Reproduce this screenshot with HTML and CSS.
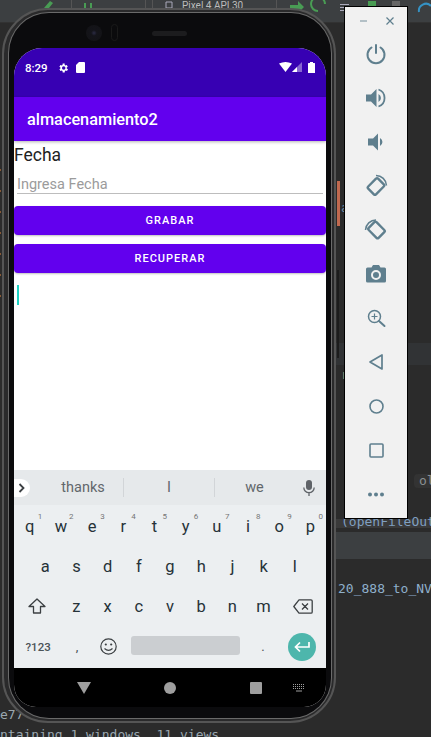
FILE: index.html
```html
<!DOCTYPE html>
<html lang="en">
<head>
  <meta charset="UTF-8">
  <meta name="viewport" content="width=device-width, initial-scale=1.0">
  <title>almacenamiento2</title>
  <link rel="stylesheet" href="styles.css">
</head>
<body>
  <!-- IDE behind the emulator -->
  <div class="ide">
    <div class="ide-top">
      <svg class="ide-icons" width="431" height="22" viewBox="0 0 431 22">
        <path stroke="#555" d="M71.500 0v22M145.500 0v22M152.500 0v22M276.500 0v22"/>
        <path fill="#499c54" d="M44 8l6-7 3 2-4 5zM84 3h2v5h-2zM90 3h2v5h-2zM290 5h8V1l6 6-6 6v-4h-8z"/>
        <path fill="none" stroke="#499c54" stroke-width="2" d="M325 4a7 7 0 1 0-7 7"/>
        <path fill="none" stroke="#aab" d="M166 2h6v6h-6z"/>
        <path fill="#aab" d="M340 4h9v1h-9zM340 7h9v1h-9zM340 10h9v1h-9z"/>
        <path fill="#499c54" d="M368 1h8v5h-8z"/>
        <path fill="#666" d="M392 1h8v5h-8z"/>
        <path fill="none" stroke="#3592c4" stroke-width="2" d="M419 12a7 7 0 0 1 12-6"/>
      </svg>
      <span class="ide-device">Pixel 4 API 30</span>
    </div>
    <div class="ide-row"></div>
    <div class="ide-bar"></div>
    <div class="ide-strip"></div>
    <div class="ide-gutter"></div>
    <div class="ide-mark"></div>
    <div class="ide-scroll"></div>
    <span class="ide-text t1">a</span>
    <span class="ide-text t2">r</span>
    <span class="ide-text t3">ole</span>
    <span class="ide-text t4">(openFileOut</span>
    <span class="ide-text t5">20_888_to_NV</span>
    <span class="ide-text t6">e77</span>
    <span class="ide-text t7">ntaining 1 windows, 11 views</span>
  </div>

  <!-- Phone -->
  <div class="phone">
    <div class="bezel">
      <div class="camera"></div>
      <div class="sensor"></div>
      <div class="speaker"></div>
      <div class="screen">
        <div class="status">
          <span class="time">8:29</span>
          <svg class="st-icon" width="12" height="12" viewBox="0 0 24 24"><path fill="#fff" fill-rule="evenodd" d="M19.400 13a7.500 7.500 0 0 0 0-2l2.100-1.600-2-3.500-2.500 1a7.500 7.500 0 0 0-1.700-1L15.400 3.200h-4L11 5.900a7.500 7.500 0 0 0-1.700 1l-2.500-1-2 3.500L6.900 11a7.500 7.500 0 0 0 0 2l-2.100 1.600 2 3.500 2.500-1a7.500 7.500 0 0 0 1.700 1l.4 2.700h4l.4-2.700a7.500 7.500 0 0 0 1.700-1l2.500 1 2-3.500zM13.400 15.500a3.500 3.500 0 1 1 0-7 3.500 3.500 0 0 1 0 7z"/></svg>
          <svg class="st-icon sd" width="9" height="11" viewBox="0 0 9 11"><path fill="#fff" d="M3 0h5a1 1 0 0 1 1 1v9a1 1 0 0 1-1 1H1a1 1 0 0 1-1-1V3z"/></svg>
          <span class="st-gap"></span>
          <svg width="13" height="10" viewBox="0 0 13 10"><path fill="#fff" d="M0 1.500Q6.500-1.500 13 1.500L6.500 10z"/></svg>
          <svg class="signal" width="10" height="10" viewBox="0 0 10 10"><path fill="#fff" opacity=".4" d="M10 0v10H0z"/><path fill="#fff" d="M5 5v5H0z"/></svg>
          <svg class="battery" width="7" height="11" viewBox="0 0 7 11"><path fill="#fff" d="M2 0h3v1h1.500a.5.5 0 0 1 .5.500V11H0V1.500A.5.5 0 0 1 .5 1H2z"/></svg>
        </div>
        <div class="appbar">almacenamiento2</div>
        <div class="content">
          <div class="label">Fecha</div>
          <div class="field">Ingresa Fecha</div>
          <div class="btn btn-first">GRABAR</div>
          <div class="btn">RECUPERAR</div>
          <div class="caret"></div>
        </div>
        <div class="suggest">
          <div class="chevron">
            <svg width="8" height="10" viewBox="0 0 8 10"><path fill="none" stroke="#3c4043" stroke-width="1.800" d="M1.500 1l4 4-4 4"/></svg>
          </div>
          <div class="word w1">thanks</div>
          <div class="word w2">I</div>
          <div class="word w3">we</div>
          <svg class="mic" width="12" height="16" viewBox="0 0 12 16"><rect x="3" y="0" width="6" height="10" rx="3" fill="#5f6368"/><path fill="none" stroke="#5f6368" stroke-width="1.300" d="M.8 7.500a5.200 5.200 0 0 0 10.400 0M6 13v3"/></svg>
        </div>
        <div class="keyboard">
          <div class="row">
            <div class="key">q<sup>1</sup></div>
            <div class="key">w<sup>2</sup></div>
            <div class="key">e<sup>3</sup></div>
            <div class="key">r<sup>4</sup></div>
            <div class="key">t<sup>5</sup></div>
            <div class="key">y<sup>6</sup></div>
            <div class="key">u<sup>7</sup></div>
            <div class="key">i<sup>8</sup></div>
            <div class="key">o<sup>9</sup></div>
            <div class="key">p<sup>0</sup></div>
          </div>
          <div class="row">
            <div class="key">a</div>
            <div class="key">s</div>
            <div class="key">d</div>
            <div class="key">f</div>
            <div class="key">g</div>
            <div class="key">h</div>
            <div class="key">j</div>
            <div class="key">k</div>
            <div class="key">l</div>
          </div>
          <div class="row">
            <div class="key key-wide">
              <svg width="18" height="16" viewBox="0 0 18 16"><path fill="none" stroke="#3c4043" stroke-width="1.300" stroke-linejoin="round" d="M9 1L1 8.500h4.500V15h7V8.500H17z"/></svg>
            </div>
            <div class="key">z</div>
            <div class="key">x</div>
            <div class="key">c</div>
            <div class="key">v</div>
            <div class="key">b</div>
            <div class="key">n</div>
            <div class="key">m</div>
            <div class="key key-wide">
              <svg width="20" height="15" viewBox="0 0 20 15"><path fill="none" stroke="#3c4043" stroke-width="1.300" stroke-linejoin="round" d="M6 .8h12a1.200 1.200 0 0 1 1.200 1.200v11a1.200 1.200 0 0 1-1.200 1.200H6L.8 7.500zM9 4.500l6 6M15 4.500l-6 6"/></svg>
            </div>
          </div>
          <div class="row row-last">
            <div class="key key-wide key-sym">?123</div>
            <div class="key key-punct">,</div>
            <div class="key">
              <svg width="17" height="17" viewBox="0 0 17 17"><circle cx="8.500" cy="8.500" r="7.700" fill="none" stroke="#3c4043" stroke-width="1.200"/><circle cx="5.800" cy="6.500" r="1.100" fill="#3c4043"/><circle cx="11.200" cy="6.500" r="1.100" fill="#3c4043"/><path fill="none" stroke="#3c4043" stroke-width="1.200" d="M4.500 10.500q4 3.600 8 0"/></svg>
            </div>
            <div class="space"><div class="space-bar"></div></div>
            <div class="key key-punct">.</div>
            <div class="key key-wide">
              <div class="enter">
                <svg width="16" height="12" viewBox="0 0 16 12"><path fill="none" stroke="#fff" stroke-width="1.700" d="M15 1v5H2M6 1.500L1.500 6 6 10.500"/></svg>
              </div>
            </div>
          </div>
        </div>
        <div class="navbar">
          <svg class="nav-back" width="14" height="12" viewBox="0 0 14 12"><path fill="#9e9e9e" d="M0 0h14L7 12z"/></svg>
          <div class="nav-home"></div>
          <div class="nav-recent"></div>
          <svg class="nav-kbd" width="14" height="9" viewBox="0 0 14 9"><path stroke="#9e9e9e" stroke-dasharray="1 1" d="M1 1.500h12M1 3.500h12M1 5.500h12"/><path stroke="#9e9e9e" d="M4 8h6"/></svg>
        </div>
      </div>
    </div>
  </div>

  <!-- Emulator toolbar -->
  <div class="tools">
    <div class="tools-top">
      <svg width="10" height="10" viewBox="0 0 10 10"><path stroke="#8aa0aa" stroke-width="1.200" d="M1 5h7"/></svg>
      <svg width="10" height="10" viewBox="0 0 10 10"><path stroke="#5f7f8e" stroke-width="1.200" d="M1.500 1.500l7 7M8.500 1.500l-7 7"/></svg>
    </div>
    <div class="tool"><svg width="22" height="22" viewBox="0 0 22 22"><path fill="none" stroke="#5f7f8e" stroke-width="2" stroke-linecap="round" d="M11 2v8M6.500 4.500a8.500 8.500 0 1 0 9 0"/></svg></div>
    <div class="tool"><svg width="22" height="22" viewBox="0 0 22 22"><path fill="#5f7f8e" d="M1 7.500h5L11.500 2v18L6 14.500H1zM13.500 7a4.500 4.500 0 0 1 0 8z"/><path fill="none" stroke="#5f7f8e" stroke-width="1.800" d="M13.500 2.500a9 9 0 0 1 0 17"/></svg></div>
    <div class="tool"><svg width="22" height="22" viewBox="0 0 22 22"><path fill="#5f7f8e" d="M3 7.500h5L13 2.500v17L8 14.500H3zM15 7a4.500 4.500 0 0 1 0 8z"/></svg></div>
    <div class="tool"><svg width="24" height="24" viewBox="0 0 24 24"><g fill="none" stroke="#5f7f8e"><rect x="5" y="7" width="14" height="11" rx="1.500" stroke-width="2.400" transform="rotate(-45 12 12.500)"/><path stroke-width="1.500" d="M12 1.500a10.500 10.500 0 0 1 10.500 10"/></g></svg></div>
    <div class="tool"><svg width="24" height="24" viewBox="0 0 24 24"><g fill="none" stroke="#5f7f8e"><rect x="7" y="5" width="11" height="14" rx="1.500" stroke-width="2.400" transform="rotate(-45 12.500 12)"/><path stroke-width="1.500" d="M1.500 12a10.500 10.500 0 0 1 10.500-10"/></g></svg></div>
    <div class="tool"><svg width="20" height="18" viewBox="0 0 20 18"><path fill="#5f7f8e" fill-rule="evenodd" d="M1.500 2.500h4L7 0h6l1.500 2.500h4A1.500 1.500 0 0 1 20 4v12a1.500 1.500 0 0 1-1.500 1.500h-17A1.500 1.500 0 0 1 0 16V4a1.500 1.500 0 0 1 1.500-1.500zM10 5a5 5 0 1 0 0 10 5 5 0 0 0 0-10zM10 7a3 3 0 1 1 0 6 3 3 0 0 1 0-6z"/></svg></div>
    <div class="tool"><svg width="19" height="19" viewBox="0 0 19 19"><g fill="none" stroke="#5f7f8e"><circle cx="7.500" cy="7.500" r="6" stroke-width="1.500"/><path stroke-width="2" stroke-linecap="round" d="M12 12l5.500 5"/><path stroke-width="1.200" d="M7.500 4.500v6M4.500 7.500h6"/></g></svg></div>
    <div class="tool"><svg width="14" height="16" viewBox="0 0 14 16"><path fill="none" stroke="#5f7f8e" stroke-width="1.700" stroke-linejoin="round" d="M13 1v14L1 8z"/></svg></div>
    <div class="tool"><svg width="15" height="15" viewBox="0 0 15 15"><circle cx="7.500" cy="7.500" r="6.500" fill="none" stroke="#5f7f8e" stroke-width="1.600"/></svg></div>
    <div class="tool"><svg width="15" height="15" viewBox="0 0 15 15"><rect x="1" y="1" width="13" height="13" rx="1" fill="none" stroke="#5f7f8e" stroke-width="1.600"/></svg></div>
    <div class="tool"><svg width="16" height="5" viewBox="0 0 16 5"><circle cx="2" cy="2.500" r="2" fill="#5f7f8e"/><circle cx="8" cy="2.500" r="2" fill="#5f7f8e"/><circle cx="14" cy="2.500" r="2" fill="#5f7f8e"/></svg></div>
  </div>
</body>
</html>
```

FILE: styles.css
```css
html, body {
  margin: 0;
  padding: 0;
  height: 100%;
}

body {
  position: relative;
  width: 431px;
  height: 737px;
  overflow: hidden;
  background-color: #2b2b2b;
  font-family: Roboto, "Liberation Sans", sans-serif;
}

/* IDE behind the emulator */
.ide-top {
  position: relative;
  height: 22px;
  background-color: #3c3f41;
  border-bottom: 1px solid #323232;
}

.ide-icons {
  display: block;
}

.ide-device {
  position: absolute;
  left: 182px;
  top: 0;
  font-size: 10px;
  line-height: 12px;
  color: #bbb;
  white-space: nowrap;
}

.ide-row {
  position: absolute;
  left: 330px;
  right: 0;
  top: 343px;
  height: 22px;
  background-color: #313335;
}

.ide-bar {
  position: absolute;
  left: 330px;
  right: 0;
  top: 519px;
  height: 9px;
  background-color: #3a3a3a;
}

.ide-strip {
  position: absolute;
  left: 330px;
  right: 0;
  top: 532px;
  height: 27px;
  background-color: #3c3f41;
}

.ide-gutter {
  position: absolute;
  left: 0;
  top: 150px;
  width: 1px;
  height: 150px;
  background: repeating-linear-gradient(#2b2b2b 0, #2b2b2b 19px, #8a5a35 19px, #8a5a35 21px);
}

.ide-mark {
  position: absolute;
  left: 337px;
  top: 181px;
  width: 3px;
  height: 45px;
  background-color: #c0694f;
}

.ide-scroll {
  position: absolute;
  left: 337px;
  top: 270px;
  width: 2px;
  height: 88px;
  background-color: #1c1c1c;
}

.ide-text {
  position: absolute;
  font-family: "DejaVu Sans Mono", monospace;
  font-size: 13px;
  line-height: 14px;
  color: #9aa7b0;
  white-space: nowrap;
}

.t1 { left: 341px; top: 201px; color: #6f8fa8; }
.t2 { left: 341px; top: 368px; color: #b09a70; }
.t3 { left: 414px; top: 474px; padding-left: 5px; border-radius: 4px; background-color: #333; color: #8a8f92; }
.t4 { left: 341px; top: 515px; color: #7f9fc0; }
.t5 { left: 338px; top: 582px; color: #8fb0cc; }
.t6 { left: 0; top: 708px; }
.t7 { left: 0; top: 728px; }

/* Phone */
.phone {
  position: absolute;
  left: 2px;
  top: 8px;
  width: 334px;
  height: 715px;
  box-sizing: border-box;
  padding: 3px 3px 3px 5px;
  border-radius: 46px;
  background-color: #2a2a2b;
  border: 2px solid #555;
}

.bezel {
  position: relative;
  height: 100%;
  box-sizing: border-box;
  padding: 35px 5px 0;
  border-radius: 40px;
  background-color: #0b0b0d;
  box-shadow: 0 0 0 1px #6a6a6a;
}

.camera {
  position: absolute;
  left: 77px;
  top: 12px;
  width: 16px;
  height: 16px;
  border-radius: 50%;
  background: radial-gradient(circle, #2b2b44 0, #14141a 25%, #131315 100%);
}

.sensor {
  position: absolute;
  left: 102px;
  top: 11px;
  width: 7px;
  height: 17px;
  border-radius: 4px;
  border: 1px solid #1a1a1a;
  box-sizing: border-box;
}

.speaker {
  position: absolute;
  left: 143px;
  top: 18px;
  width: 35px;
  height: 5px;
  border-radius: 3px;
  background-color: #1c1c1e;
}

.screen {
  width: 312px;
  height: 659px;
  border-radius: 28px 28px 22px 22px;
  overflow: hidden;
  display: flex;
  flex-direction: column;
  background-color: #fff;
}

.status {
  height: 49px;
  flex-shrink: 0;
  box-sizing: border-box;
  padding: 13px 11px 0 11px;
  display: flex;
  align-items: flex-start;
  background-color: #3700b3;
  color: #fff;
}

.time {
  font-size: 11.500px;
  font-weight: 500;
  line-height: 14px;
  margin-right: 9px;
}

.st-icon { margin-top: 1px; }
.sd { margin-left: 7px; }
.st-gap { flex: 1; }
.status svg:not(.st-icon) { margin-top: 1px; }
.battery { margin-left: 6px; }

.appbar {
  height: 44px;
  flex-shrink: 0;
  box-sizing: border-box;
  padding: 14px 0 0 13px;
  font-size: 16.300px;
  font-weight: 500;
  line-height: 18px;
  color: #fff;
  background-color: #6200ee;
  box-shadow: 0 1px 3px rgba(0,0,0,0.3);
  position: relative;
}

.content {
  flex: 1;
  min-height: 0;
}

.label {
  margin-top: 3px;
  font-size: 17.500px;
  line-height: 22px;
  color: #222;
}

.field {
  margin: 8px 3px 0;
  height: 19px;
  font-size: 14.500px;
  line-height: 21px;
  color: #9b9b9b;
  border-bottom: 1px solid #bdbdbd;
}

.btn {
  height: 29px;
  margin-top: 9px;
  border-radius: 4px;
  background-color: #6200ee;
  box-shadow: 0 1px 2px rgba(0,0,0,0.25);
  color: #fff;
  font-size: 11px;
  font-weight: 500;
  letter-spacing: 1px;
  line-height: 30px;
  text-align: center;
}

.btn-first { margin-top: 12px; }

.caret {
  width: 2px;
  height: 20px;
  margin: 12px 0 0 3px;
  background-color: #1dd3c4;
}

/* Keyboard */
.suggest {
  height: 35px;
  flex-shrink: 0;
  display: flex;
  align-items: center;
  background-color: #e6e9eb;
  color: #62676b;
  font-size: 14.500px;
}

.chevron {
  width: 16px;
  height: 18px;
  flex-shrink: 0;
  display: flex;
  align-items: center;
  justify-content: center;
  border-radius: 0 9px 9px 0;
  background-color: #fff;
}

.word {
  height: 19px;
  line-height: 19px;
  text-align: center;
  box-sizing: border-box;
}

.w1 { width: 94px; padding-left: 13px; border-right: 1px solid #d2d5d8; }
.w2 { width: 91px; border-right: 1px solid #d2d5d8; }
.w3 { width: 79px; }

.mic {
  margin-left: 9px;
}

.keyboard {
  height: 163px;
  flex-shrink: 0;
  box-sizing: border-box;
  padding-top: 1px;
  background-color: #eceff1;
}

.row {
  height: 40px;
  display: flex;
  justify-content: center;
}

.row-last { height: 41px; }

.key {
  position: relative;
  width: 31.200px;
  flex-shrink: 0;
  display: flex;
  align-items: center;
  justify-content: center;
  font-size: 16.500px;
  color: #263238;
}

.key sup {
  position: absolute;
  right: 3px;
  top: 6px;
  font-size: 8px;
  line-height: 10px;
  color: #757575;
}

.key-wide { width: 46.800px; }

.key-sym {
  font-size: 11.500px;
  font-weight: 500;
  color: #4b5358;
}

.key-punct {
  font-size: 13px;
  color: #4b5358;
}

.space {
  width: 123.400px;
  flex-shrink: 0;
  box-sizing: border-box;
  padding: 10px 7px 0;
}

.space-bar {
  height: 19px;
  border-radius: 3px;
  background-color: #cbced1;
}

.enter {
  width: 28px;
  height: 28px;
  border-radius: 50%;
  background-color: #4db6ac;
  display: flex;
  align-items: center;
  justify-content: center;
}

.navbar {
  height: 39px;
  flex-shrink: 0;
  background-color: #000;
  display: flex;
  align-items: center;
}

.nav-back { margin-left: 63px; }

.nav-home {
  width: 12px;
  height: 12px;
  margin-left: 73px;
  border-radius: 50%;
  background-color: #9e9e9e;
}

.nav-recent {
  width: 12px;
  height: 12px;
  margin-left: 74px;
  border-radius: 1px;
  background-color: #9e9e9e;
}

.nav-kbd { margin-left: 30px; }

/* Emulator toolbar */
.tools {
  position: absolute;
  left: 344px;
  top: 6px;
  width: 64px;
  height: 513px;
  box-sizing: border-box;
  background-color: #f1f1f1;
  border: 1px solid #000;
}

.tools-top {
  height: 25px;
  box-sizing: border-box;
  padding: 9px 12px 0 14px;
  display: flex;
  justify-content: space-between;
  align-items: flex-start;
}

.tool {
  height: 44px;
  display: flex;
  align-items: center;
  justify-content: center;
}
```
